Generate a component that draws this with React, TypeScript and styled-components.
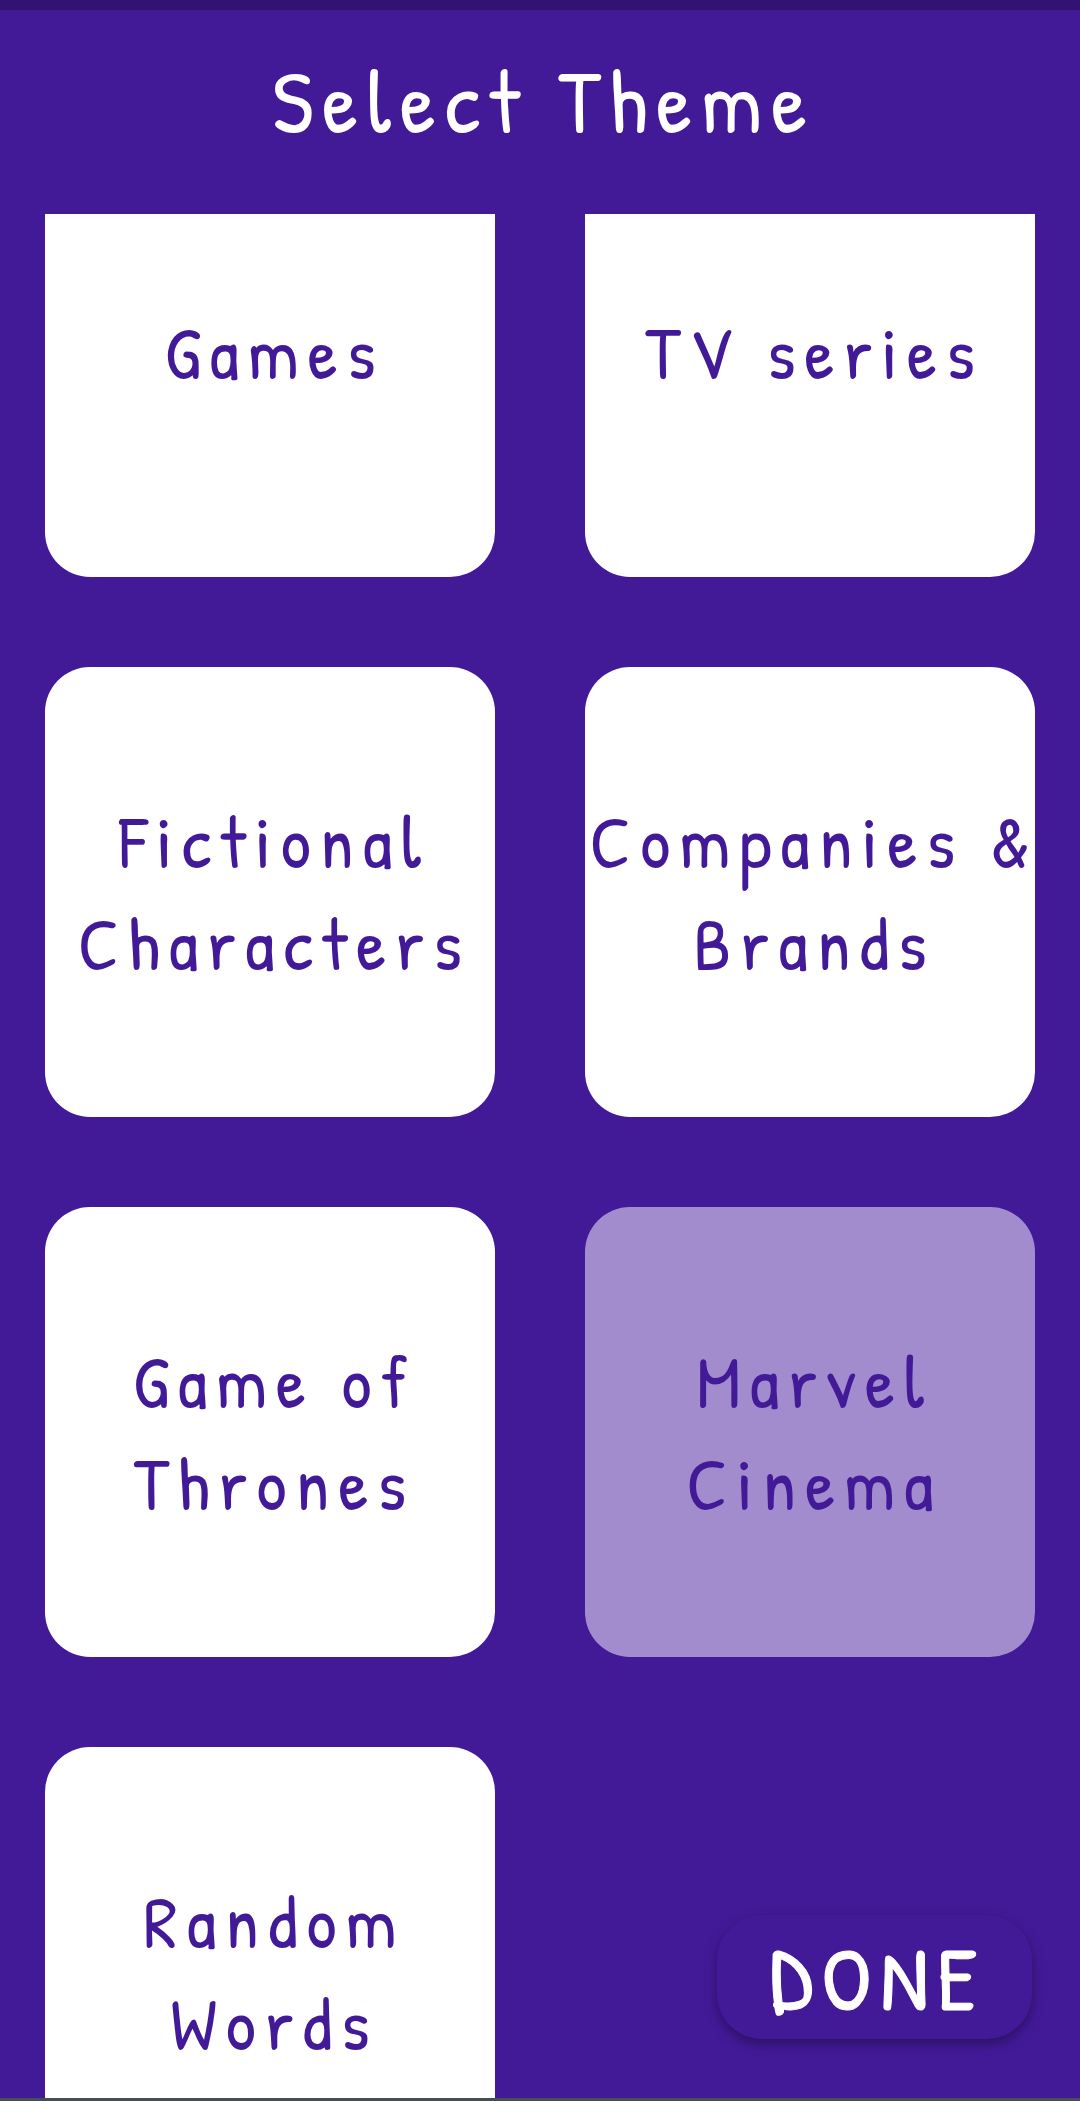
import React, { useState } from 'react';
import styled, { createGlobalStyle } from 'styled-components';

const purple = '#421a98';
const font = "'Patrick Hand', Lato, 'Open Sans', sans-serif";

const GlobalStyle = createGlobalStyle`
  *, *::before, *::after { box-sizing: border-box; }
  body { margin: 0; background: ${purple}; }
  button { font: inherit; letter-spacing: inherit; cursor: pointer; }
`;

const Screen = styled.div`
  position: relative;
  display: flex;
  flex-direction: column;
  height: 100vh;
  overflow: hidden;
  background: ${purple};
  font-family: ${font};
  letter-spacing: 9px;
`;

const StatusBar = styled.div`
  flex: none;
  height: 10px;
  background: #321373;
`;

const NavigationBar = styled.div`
  flex: none;
  height: 3px;
  background: #454f54;
`;

const Header = styled.header`
  flex: none;
  padding: 29px 36px 53px 44px;
`;

const Title = styled.h1`
  margin: 0;
  color: #fff;
  font-size: 90px;
  font-weight: 400;
  line-height: 122px;
  text-align: center;
`;

const ThemeList = styled.main`
  flex: 1;
  min-height: 0;
  overflow: hidden;
`;

/* The list is scrolled a little, so the first row starts under the header. */
const Grid = styled.div`
  display: grid;
  grid-template-columns: repeat(2, minmax(0, 1fr));
  gap: 90px;
  margin-top: -87px;
  padding: 0 45px;
`;

const ThemeCard = styled.button<{ $selected: boolean }>`
  display: flex;
  align-items: center;
  justify-content: center;
  aspect-ratio: 1;
  padding: 0;
  border: 0;
  border-radius: 45px;
  background: ${({ $selected }) => ($selected ? '#a28ccd' : '#fff')};
  color: ${purple};
  font-size: 75px;
  line-height: 102px;
  text-align: center;
`;

/* The negative margin takes back the spacing after the last letter. */
const ThemeName = styled.span`
  margin-right: -9px;
`;

const DoneButton = styled.button`
  position: absolute;
  right: 48px;
  bottom: 62px;
  padding: 0 46px 0 53px;
  border: 0;
  border-radius: 45px;
  background: ${purple};
  box-shadow: 0 5px 12px rgba(0, 0, 0, 0.35);
  color: #fff;
  font-size: 90px;
  line-height: 124px;
  -webkit-text-stroke: 1px #fff;
`;

const themes = [
  'Games',
  'TV series',
  'Fictional Characters',
  'Companies & Brands',
  'Game of Thrones',
  'Marvel Cinema',
  'Random Words',
];

export default function App() {
  const [selected, setSelected] = useState('Marvel Cinema');

  return (
    <>
      <GlobalStyle />
      <Screen>
        <StatusBar />
        <Header>
          <Title>Select Theme</Title>
        </Header>
        <ThemeList>
          <Grid>
            {themes.map((theme) => (
              <ThemeCard
                key={theme}
                type="button"
                $selected={theme === selected}
                aria-pressed={theme === selected}
                onClick={() => setSelected(theme)}
              >
                <ThemeName>{theme}</ThemeName>
              </ThemeCard>
            ))}
          </Grid>
        </ThemeList>
        <DoneButton type="button">DONE</DoneButton>
        <NavigationBar />
      </Screen>
    </>
  );
}
